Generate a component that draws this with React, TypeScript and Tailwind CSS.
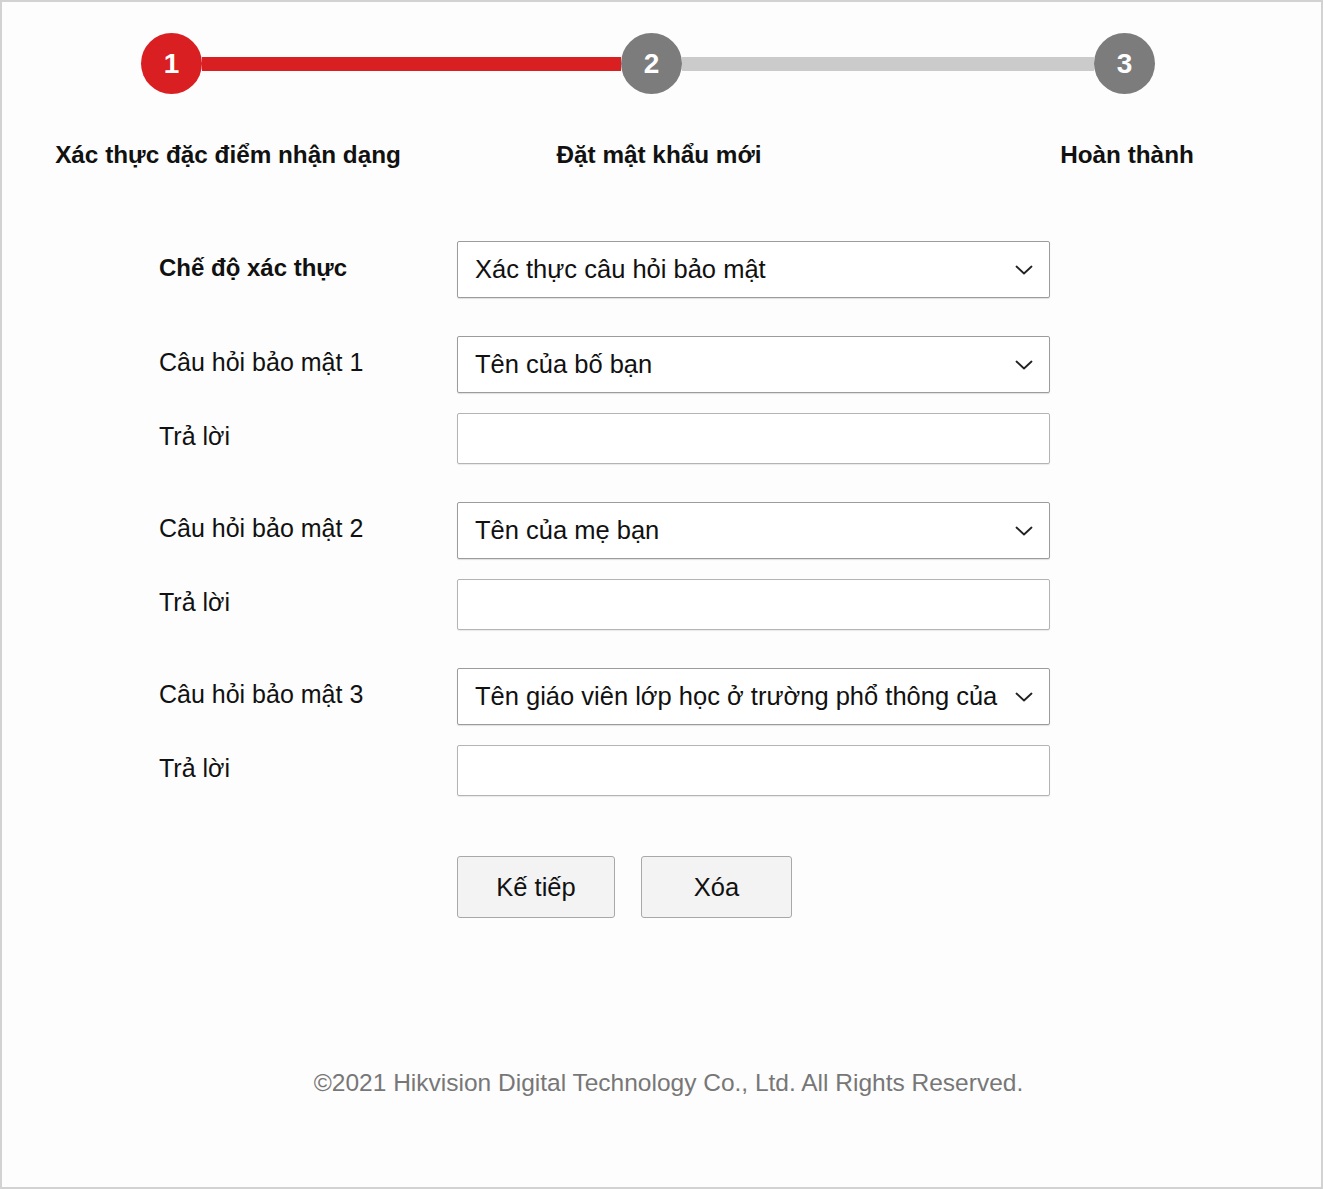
import React from "react";

const font = { fontFamily: '"Liberation Sans", Arial, Helvetica, sans-serif' };

function Chevron() {
  return (
    <svg width="18" height="10" viewBox="0 0 18 10" fill="none" className="shrink-0">
      <path d="M1.5 1.5 L9 8.5 L16.5 1.5" stroke="#222" strokeWidth="1.8" strokeLinecap="round" strokeLinejoin="round" />
    </svg>
  );
}

function SelectBox({ text }: { text: string }) {
  return (
    <div className="w-[593px] h-[57px] border border-[#9c9c9c] rounded-[2px] bg-white shadow-[0_1px_1px_rgba(0,0,0,0.12)] flex items-center pl-[17px] pr-[16px]">
      <span className="flex-1 text-[25.5px] text-[#111] whitespace-nowrap overflow-hidden">{text}</span>
      <Chevron />
    </div>
  );
}

function InputBox() {
  return <div className="w-[593px] h-[51px] border border-[#b4b4b4] rounded-[2px] bg-white shadow-[0_1px_1px_rgba(0,0,0,0.08)]" />;
}

function Row({ label, bold, children, mt }: { label: string; bold?: boolean; children: React.ReactNode; mt: string }) {
  return (
    <div className={`flex items-center ${mt}`}>
      <div className={`w-[298px] pl-[157px] box-content text-[#111] -mt-[4px] whitespace-nowrap ${bold ? "font-bold text-[24px]" : "text-[25px]"}`}>{label}</div>
      {children}
    </div>
  );
}

export default function App() {
  return (
    <div style={font} className="w-[1323px] h-[1189px] bg-[#fdfdfd] border-2 border-[#d2d2d2] box-border relative overflow-hidden">
      {/* stepper */}
      <div className="flex items-center pl-[139px] pt-[31px]">
        <div className="w-[61px] h-[61px] rounded-full bg-[#d91f22] flex items-center justify-center text-white font-bold text-[28px] shrink-0">1</div>
        <div className="w-[419px] h-[14px] bg-[#d91f22]" />
        <div className="w-[61px] h-[61px] rounded-full bg-[#7c7c7c] flex items-center justify-center text-white font-bold text-[28px] shrink-0">2</div>
        <div className="w-[412px] h-[14px] bg-[#cbcbcb]" />
        <div className="w-[61px] h-[61px] rounded-full bg-[#7c7c7c] flex items-center justify-center text-white font-bold text-[28px] shrink-0">3</div>
      </div>
      <div className="flex pl-[26px] mt-[47px] text-[24.3px] font-bold text-[#111] leading-[28px]">
        <div className="w-[400px] text-center whitespace-nowrap">Xác thực đặc điểm nhận dạng</div>
        <div className="w-[400px] ml-[31px] text-center whitespace-nowrap">Đặt mật khẩu mới</div>
        <div className="w-[200px] ml-[168px] text-center whitespace-nowrap">Hoàn thành</div>
      </div>

      {/* form */}
      <div className="flex flex-col mt-[72px]">
        <Row label="Chế độ xác thực" bold mt="mt-0">
          <SelectBox text="Xác thực câu hỏi bảo mật" />
        </Row>
        <Row label="Câu hỏi bảo mật 1" mt="mt-[38px]">
          <SelectBox text="Tên của bố bạn" />
        </Row>
        <Row label="Trả lời" mt="mt-[20px]">
          <InputBox />
        </Row>
        <Row label="Câu hỏi bảo mật 2" mt="mt-[38px]">
          <SelectBox text="Tên của mẹ bạn" />
        </Row>
        <Row label="Trả lời" mt="mt-[20px]">
          <InputBox />
        </Row>
        <Row label="Câu hỏi bảo mật 3" mt="mt-[38px]">
          <SelectBox text="Tên giáo viên lớp học ở trường phổ thông của" />
        </Row>
        <Row label="Trả lời" mt="mt-[20px]">
          <InputBox />
        </Row>

        <div className="flex pl-[455px] mt-[60px] gap-[26px]">
          <button className="w-[158px] h-[62px] bg-[#f3f3f3] border border-[#a8a8a8] rounded-[3px] text-[25.5px] text-[#111]">Kế tiếp</button>
          <button className="w-[151px] h-[62px] bg-[#f3f3f3] border border-[#a8a8a8] rounded-[3px] text-[25.5px] text-[#111]">Xóa</button>
        </div>
      </div>

      <div className="absolute left-0 right-0 top-[1063px] text-center text-[24.5px] text-[#777] pl-[14px]">
        ©2021 Hikvision Digital Technology Co., Ltd. All Rights Reserved.
      </div>
    </div>
  );
}
